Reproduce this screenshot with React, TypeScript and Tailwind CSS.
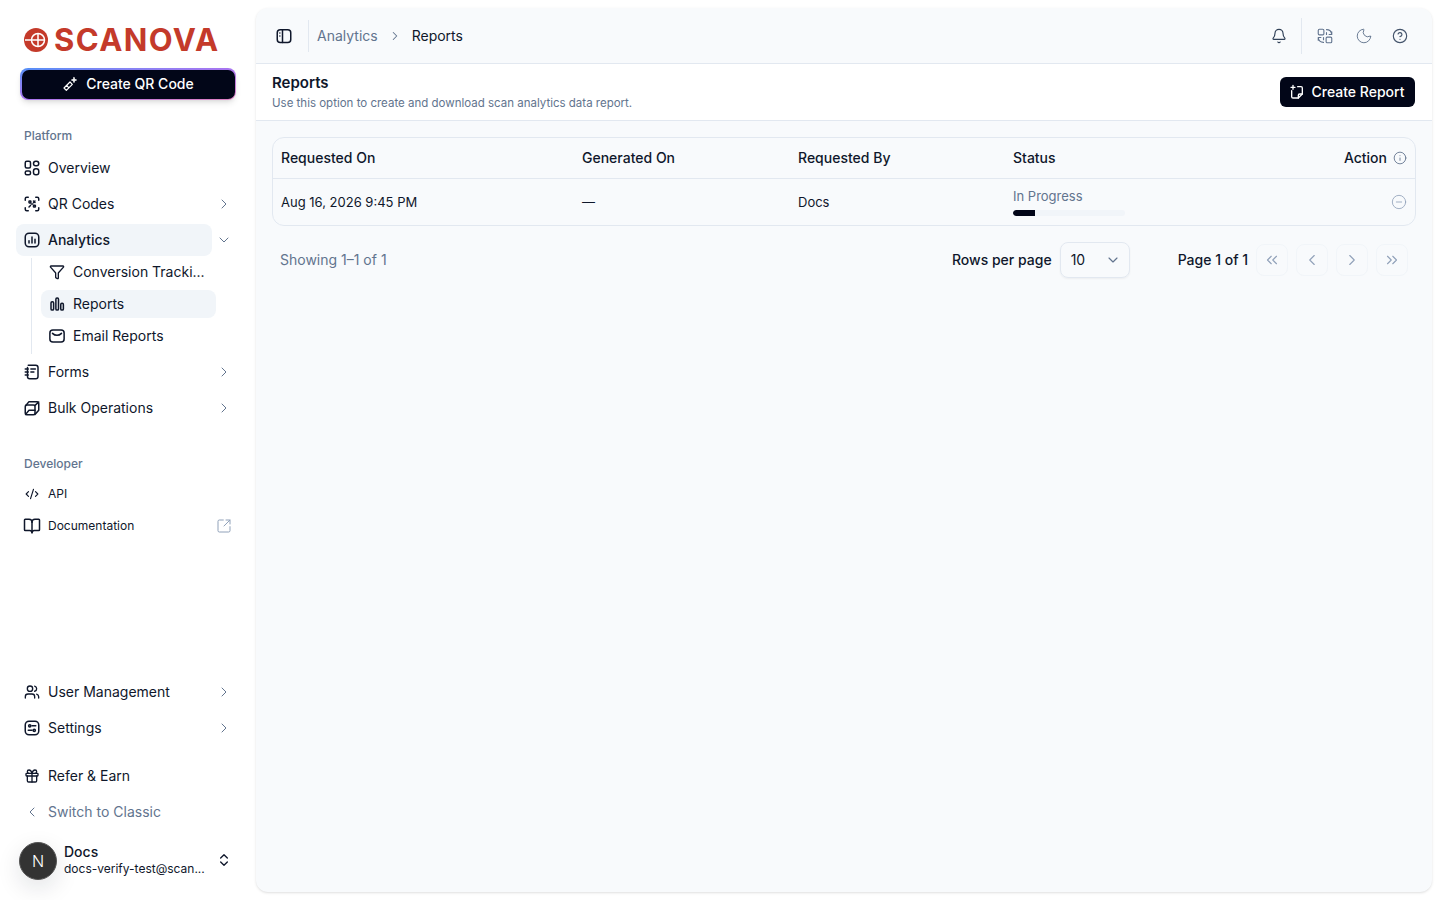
import {
  Bell,
  BookOpen,
  ChevronDown,
  ChevronLeft,
  ChevronRight,
  ChevronsLeft,
  ChevronsRight,
  ChevronsUpDown,
  CircleHelp,
  CircleMinus,
  CodeXml,
  Funnel,
  Gift,
  Info,
  Moon,
  SquareArrowOutUpRight,
  Users,
} from 'lucide-react';
import type { ReactNode } from 'react';

function Svg({ children, className = '-mx-px h-[18px] w-[18px] shrink-0', strokeWidth = 2 }: { children: ReactNode; className?: string; strokeWidth?: number }) {
  return (
    <svg
      viewBox="0 0 24 24"
      fill="none"
      stroke="currentColor"
      strokeWidth={strokeWidth}
      strokeLinecap="round"
      strokeLinejoin="round"
      className={className}
    >
      {children}
    </svg>
  );
}

const OverviewIcon = () => (
  <Svg>
    <rect x="3" y="3" width="7" height="9" rx="2" />
    <rect x="14" y="3" width="7" height="6" rx="3" />
    <rect x="14" y="13" width="7" height="8" rx="3" />
    <rect x="3" y="16" width="7" height="5" rx="2" />
  </Svg>
);

const QrIcon = () => (
  <Svg>
    <path d="M3 7V5a2 2 0 0 1 2-2h2M17 3h2a2 2 0 0 1 2 2v2M21 17v2a2 2 0 0 1-2 2h-2M7 21H5a2 2 0 0 1-2-2v-2" />
    <rect x="8" y="8" width="2.5" height="2.5" rx="0.5" />
    <rect x="14" y="13.5" width="2.5" height="2.5" rx="0.5" />
    <path d="M8 16l2-2M14 8l2 2M16 8l-2 2M11 12h2" />
  </Svg>
);

const AnalyticsIcon = () => (
  <Svg>
    <rect x="3" y="3" width="18" height="18" rx="5" />
    <path d="M8 16v-3M12 16V8M16 16v-5" />
  </Svg>
);

const BarsIcon = () => (
  <Svg>
    <rect x="4" y="9" width="3.5" height="11" rx="1.5" />
    <rect x="10.5" y="4" width="3.5" height="16" rx="1.5" />
    <rect x="17" y="11" width="3.5" height="9" rx="1.5" />
  </Svg>
);

const MailIcon = () => (
  <Svg>
    <rect x="2.5" y="4" width="19" height="16" rx="4" />
    <path d="M6 8.5c3.5 3.5 8.5 3.5 12 0" />
  </Svg>
);

const FormsIcon = () => (
  <Svg>
    <path d="M7 3h10a3 3 0 0 1 3 3v12a3 3 0 0 1-3 3H9a3 3 0 0 1-3-3V6" />
    <path d="M10.5 8h6M10.5 12h4M3 8h4M3 12h4M3 16h4" />
  </Svg>
);

const BulkIcon = () => (
  <Svg>
    <rect x="3" y="8" width="13" height="13" rx="2" />
    <path d="M3.5 9 8 3.5h11a2 2 0 0 1 2 2V15l-5 5.5M16 8.5 21 4M3.5 20.5 8 15h8" />
  </Svg>
);

const SettingsIcon = () => (
  <Svg>
    <rect x="3" y="3" width="18" height="18" rx="5" />
    <circle cx="9" cy="9" r="1.5" />
    <circle cx="15" cy="15" r="1.5" />
    <path d="M12 9h5M7 15h5" />
  </Svg>
);

const PanelIcon = () => (
  <Svg>
    <rect x="3" y="3.5" width="18" height="17" rx="4" />
    <path d="M10 3.5v17M6.5 8h0M6.5 12h0" />
  </Svg>
);

const TranslateIcon = () => (
  <Svg strokeWidth={1.5}>
    <rect x="3" y="3" width="7.5" height="7.5" rx="1.5" />
    <rect x="13.5" y="13.5" width="7.5" height="7.5" rx="1.5" />
    <path d="M14 3.5c3.5 0 6.5 2.5 7 6.5M21 6.5V10h-3.5M14 10V7.5M10 20.5c-3.5 0-6.5-2.5-7-6.5M3 17.5V14h3.5M10 14v3" />
  </Svg>
);

const NoteIcon = () => (
  <Svg className="h-4 w-4 shrink-0">
    <path d="M4 10v9a2 2 0 0 0 2 2h8l6-6V6a2 2 0 0 0-2-2h-5" />
    <path d="M14 21v-4a2 2 0 0 1 2-2h4M6 2v6M3 5h6" />
  </Svg>
);

const SparkIcon = () => (
  <Svg className="h-4 w-4 shrink-0">
    <path d="m3 18 9-9 3.5 3.5-9 9zM7 14l3 3.5" strokeWidth={1.8} />
    <path d="M18 2l1 3 3 1-3 1-1 3-1-3-3-1 3-1z" fill="currentColor" strokeWidth={1} />
  </Svg>
);

function NavItem({ icon, label, chevron = false, small = false }: { icon: ReactNode; label: string; chevron?: boolean; small?: boolean }) {
  return (
    <div className={`flex items-center ${small ? 'h-8' : 'h-9'}`}>
      <div className="flex h-8 w-[196px] items-center gap-2 rounded-lg px-2 text-[#0f172b]">
        {icon}
        <span className={small ? 'text-xs' : 'text-sm'}>{label}</span>
      </div>
      {chevron && <ChevronRight className="ml-1 h-4 w-4 text-slate-500" strokeWidth={1.5} />}
    </div>
  );
}

function SubItem({ icon, label, active = false }: { icon: ReactNode; label: string; active?: boolean }) {
  return (
    <div className={`flex h-7 w-[175px] items-center gap-2 rounded-lg px-2 text-sm text-[#0f172b] ${active ? 'bg-[#f1f5f9]' : ''}`}>
      {icon}
      <span>{label}</span>
    </div>
  );
}

function Sidebar() {
  return (
    <aside className="flex h-[900px] w-[256px] shrink-0 flex-col bg-white">
      <div className="flex h-[68px] items-center gap-[6px] pl-6 pt-[11px]">
        <svg viewBox="0 0 24 24" className="h-6 w-6">
          <circle cx="12" cy="12" r="12" fill="#c43a2a" />
          <circle cx="14" cy="12" r="6.5" fill="none" stroke="#fff" strokeWidth="1.5" />
          <path d="M14 5.5v13M1 12h19.5" stroke="#fff" strokeWidth="1.5" />
        </svg>
        <span className="text-[31px] leading-none font-bold tracking-[1.4px] text-[#c43a2a]">SCANOVA</span>
      </div>

      <div className="px-5">
        <div className="h-8 rounded-lg bg-linear-to-br from-[#4f8ff7] via-[#a875f0] to-[#e07fc0] p-[1.5px] shadow-md">
          <div className="flex h-full items-center justify-center gap-2 rounded-[7px] bg-[#020618] text-sm font-medium text-white">
            <SparkIcon />
            Create QR Code
          </div>
        </div>
      </div>

      <div className="mt-[24px] flex h-6 items-center pl-6 text-xs font-medium text-slate-500">Platform</div>
      <div className="mt-[2px] pl-4">
        <NavItem icon={<OverviewIcon />} label="Overview" />
        <NavItem icon={<QrIcon />} label="QR Codes" chevron />
        <div className="flex h-9 items-center">
          <div className="flex h-8 w-[196px] items-center gap-2 rounded-lg bg-[#f1f5f9] px-2 text-sm font-medium text-[#0f172b]">
            <AnalyticsIcon />
            Analytics
          </div>
          <ChevronDown className="ml-1 h-4 w-4 text-slate-500" strokeWidth={1.5} />
        </div>
        <div className="ml-[15px] flex w-[185px] flex-col gap-1 border-l border-[#e2e8f0] pb-1 pl-[9px]">
          <SubItem icon={<Funnel className="h-4 w-4" strokeWidth={2} />} label="Conversion Tracki..." />
          <SubItem icon={<BarsIcon />} label="Reports" active />
          <SubItem icon={<MailIcon />} label="Email Reports" />
        </div>
        <NavItem icon={<FormsIcon />} label="Forms" chevron />
        <NavItem icon={<BulkIcon />} label="Bulk Operations" chevron />
      </div>

      <div className="mt-[26px] flex h-6 items-center pl-6 text-xs font-medium text-slate-500">Developer</div>
      <div className="mt-[2px] pl-4">
        <NavItem icon={<CodeXml className="mx-px h-[14px] w-[14px]" />} label="API" small />
        <div className="flex h-8 items-center">
          <div className="flex h-8 w-[196px] items-center gap-2 px-2 text-xs text-[#0f172b]">
            <BookOpen className="-mx-px h-[18px] w-[18px]" />
            Documentation
          </div>
          <SquareArrowOutUpRight className="ml-[4px] h-4 w-4 text-slate-400" strokeWidth={1.5} />
        </div>
      </div>

      <div className="mt-auto pl-4">
        <NavItem icon={<Users className="h-4 w-4" />} label="User Management" chevron />
        <NavItem icon={<SettingsIcon />} label="Settings" chevron />
        <div className="mt-3">
          <NavItem icon={<Gift className="h-4 w-4" />} label="Refer & Earn" />
        </div>
        <div className="flex h-9 items-center gap-2 px-2 text-sm text-slate-500">
          <ChevronLeft className="h-4 w-4" strokeWidth={1.5} />
          Switch to Classic
        </div>
      </div>

      <div className="mt-[12px] mb-[20px] flex items-center pl-[19px]">
        <div className="flex h-[38px] w-[38px] items-center justify-center rounded-full border border-[#555] bg-[#333] text-base font-light text-white shadow-[0_8px_24px_rgba(15,23,42,0.12)]">
          N
        </div>
        <div className="-mt-[2px] ml-[7px] w-[150px]">
          <div className="text-sm leading-[18px] font-medium text-[#0f172b]">Docs</div>
          <div className="truncate text-xs leading-4 text-[#0f172b]">docs-verify-test@scan...</div>
        </div>
        <ChevronsUpDown className="-mt-[2px] ml-[2px] h-4 w-4 text-[#0f172b]" strokeWidth={2} />
      </div>
    </aside>
  );
}

function PageButton({ children }: { children: ReactNode }) {
  return (
    <div className="flex h-8 w-8 items-center justify-center rounded-lg border border-[#f1f5f9] text-slate-400">
      {children}
    </div>
  );
}

function ReportsTable() {
  return (
    <div className="overflow-hidden rounded-xl border border-[#e2e8f0]">
      <table className="w-full text-[13px] text-[#0f172b]">
        <thead>
          <tr className="h-[40px] border-b border-[#e2e8f0] text-left text-sm">
            <th className="w-[301px] pl-2 font-medium">Requested On</th>
            <th className="w-[216px] pl-2 font-medium">Generated On</th>
            <th className="w-[215px] pl-2 font-medium">Requested By</th>
            <th className="pl-2 font-medium">Status</th>
            <th className="w-[120px] pr-2 font-medium">
              <div className="flex items-center justify-end gap-[6px]">
                Action
                <Info className="h-[14px] w-[14px] text-slate-500" strokeWidth={1.5} />
              </div>
            </th>
          </tr>
        </thead>
        <tbody>
          <tr className="h-[47px]">
            <td className="pl-2 pt-[2px]">Aug 16, 2026 9:45 PM</td>
            <td className="pl-2 pt-[2px]">—</td>
            <td className="pl-2 pt-[2px]">Docs</td>
            <td className="pl-2">
              <div className="leading-[18px] text-slate-500">In Progress</div>
              <div className="mt-[5px] h-[6px] w-[112px] overflow-hidden rounded-full bg-[#f1f5f9]">
                <div className="h-full w-[20%] rounded-l-full bg-[#020618]" />
              </div>
            </td>
            <td className="pr-2">
              <div className="flex justify-end">
                <CircleMinus className="h-4 w-4 text-slate-400" strokeWidth={1.25} />
              </div>
            </td>
          </tr>
        </tbody>
      </table>
    </div>
  );
}

export default function App() {
  return (
    <div className="flex h-[900px] overflow-hidden bg-white font-['Inter',sans-serif]">
      <Sidebar />
      <main className="my-2 mr-2 flex min-w-0 flex-1 flex-col overflow-hidden rounded-xl bg-[#f8fafc] shadow-sm">
        <header className="flex h-14 items-center border-b border-[#e2e8f0] pl-5 pr-6">
          <span className="flex text-[#0f172b]">
            <PanelIcon />
          </span>
          <div className="ml-4 h-8 w-px bg-[#e2e8f0]" />
          <span className="ml-2 text-sm text-slate-500">Analytics</span>
          <ChevronRight className="ml-[10px] h-[14px] w-[14px] text-slate-500" strokeWidth={1.75} />
          <span className="ml-[10px] text-sm text-[#0f172b]">Reports</span>
          <Bell className="ml-auto h-4 w-4 text-slate-700" strokeWidth={1.75} />
          <div className="ml-[14px] h-9 w-px bg-[#e2e8f0]" />
          <span className="ml-[15px] flex text-slate-500">
            <TranslateIcon />
          </span>
          <Moon className="ml-[22px] -mr-px h-[18px] w-[18px] text-slate-500" strokeWidth={1.25} />
          <CircleHelp className="ml-5 h-4 w-4 text-slate-600" strokeWidth={1.75} />
        </header>

        <section className="flex h-[57px] items-center justify-between border-b border-[#e2e8f0] bg-white pl-4 pr-[17px]">
          <div>
            <h1 className="text-[15px] leading-[19px] font-semibold text-[#0f172b]">Reports</h1>
            <p className="mt-[3px] text-[11.5px] leading-4 text-slate-500">
              Use this option to create and download scan analytics data report.
            </p>
          </div>
          <div className="flex h-[30px] w-[135px] items-center justify-center gap-[7px] rounded-md bg-[#020618] pr-[2px] text-sm font-medium text-white">
            <NoteIcon />
            Create Report
          </div>
        </section>

        <div className="px-4 pt-4">
          <ReportsTable />
          <div className="mt-4 flex h-9 items-center px-2 text-sm font-medium text-[#0f172b]">
            <span className="font-normal text-slate-500">Showing 1–1 of 1</span>
            <span className="ml-auto">Rows per page</span>
            <div className="ml-2 flex h-9 w-[70px] items-center justify-between rounded-lg border border-[#e2e8f0] pl-[10px] pr-2 font-normal shadow-xs">
              10
              <ChevronDown className="h-4 w-4 text-slate-500" strokeWidth={1.75} />
            </div>
            <span className="ml-12">Page 1 of 1</span>
            <div className="ml-2 flex gap-2">
              <PageButton><ChevronsLeft className="h-[18px] w-[18px]" strokeWidth={1.5} /></PageButton>
              <PageButton><ChevronLeft className="h-[18px] w-[18px]" strokeWidth={1.5} /></PageButton>
              <PageButton><ChevronRight className="h-[18px] w-[18px]" strokeWidth={1.5} /></PageButton>
              <PageButton><ChevronsRight className="h-[18px] w-[18px]" strokeWidth={1.5} /></PageButton>
            </div>
          </div>
        </div>
      </main>
    </div>
  );
}
